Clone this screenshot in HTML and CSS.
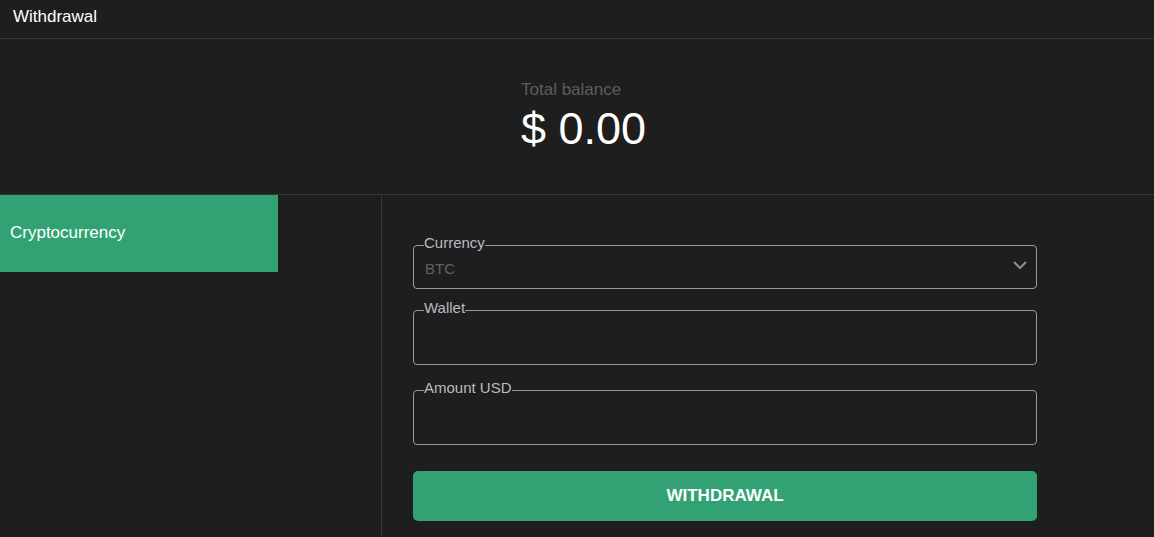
FILE: index.html
```html
<!DOCTYPE html>
<html>
<head>
<meta charset="utf-8">
<link rel="stylesheet" href="styles.css">
</head>
<body>
<header class="topbar">Withdrawal</header>
<section class="balance">
  <div class="balance-label">Total balance</div>
  <div class="balance-value">$ 0.00</div>
</section>
<main class="content">
  <aside class="sidebar">
    <div class="tab active">Cryptocurrency</div>
  </aside>
  <div class="form-area">
    <form class="form">
      <fieldset class="field field-select">
        <legend>Currency</legend>
        <div class="select-value">
          <span>BTC</span>
          <svg class="chevron" width="16" height="10" viewBox="0 0 16 10"><path d="M2 2 L8 8 L14 2" fill="none" stroke="#8a9099" stroke-width="2"/></svg>
        </div>
      </fieldset>
      <fieldset class="field field-wallet">
        <legend>Wallet</legend>
        <div class="input"></div>
      </fieldset>
      <fieldset class="field field-amount">
        <legend>Amount USD</legend>
        <div class="input"></div>
      </fieldset>
      <button type="button" class="submit">WITHDRAWAL</button>
    </form>
  </div>
</main>
</body>
</html>
```
FILE: styles.css
```css
html, body {
  margin: 0;
  padding: 0;
  background: #1e1e1e;
  font-family: "Liberation Sans", Arial, sans-serif;
  color: #fff;
  height: 100%;
  overflow: hidden;
}
.topbar {
  height: 39px;
  box-sizing: border-box;
  border-bottom: 1px solid #353535;
  font-size: 17px;
  line-height: 34px;
  padding-left: 13px;
}
.balance {
  height: 156px;
  box-sizing: border-box;
  border-bottom: 1px solid #353535;
  padding-left: 521px;
  padding-top: 41px;
}
.balance-label {
  font-size: 17px;
  color: #5c5c5f;
  line-height: 20px;
}
.balance-value {
  font-size: 45px;
  line-height: 52px;
  margin-top: 3px;
  color: #fff;
}
.content {
  display: flex;
  height: 342px;
}
.sidebar {
  width: 381px;
  border-right: 1px solid #353535;
  flex-shrink: 0;
}
.tab {
  width: 278px;
  height: 77px;
  box-sizing: border-box;
  padding-left: 10px;
  font-size: 17px;
  line-height: 75px;
}
.tab.active {
  background: #32a274;
}
.form-area {
  padding-left: 31px;
  padding-top: 40px;
}
.form {
  width: 624px;
  display: flex;
  flex-direction: column;
}
.field {
  margin: 0;
  padding: 0 11px;
  border: 1px solid #9a9a9a;
  border-radius: 4px;
  min-width: 0;
}
.field legend {
  padding: 0 0 4px;
  margin-left: -1px;
  font-size: 15px;
  line-height: 16px;
  color: #b9bcc2;
}
.field-select {
  height: 54px;
  box-sizing: border-box;
}
.select-value {
  display: flex;
  align-items: center;
  justify-content: space-between;
  height: 26px;
  font-size: 15px;
  color: #5e6068;
}
.chevron {
  margin-right: -3px;
  margin-top: -7px;
}
.field-wallet {
  margin-top: 11px;
  height: 65px;
  box-sizing: border-box;
}
.field-amount {
  margin-top: 15px;
  height: 65px;
  box-sizing: border-box;
}
.submit {
  margin-top: 26px;
  height: 50px;
  border: none;
  border-radius: 5px;
  background: #32a274;
  color: #fff;
  font-family: "Liberation Sans", Arial, sans-serif;
  font-weight: bold;
  font-size: 17px;
  padding: 0;
}
```
